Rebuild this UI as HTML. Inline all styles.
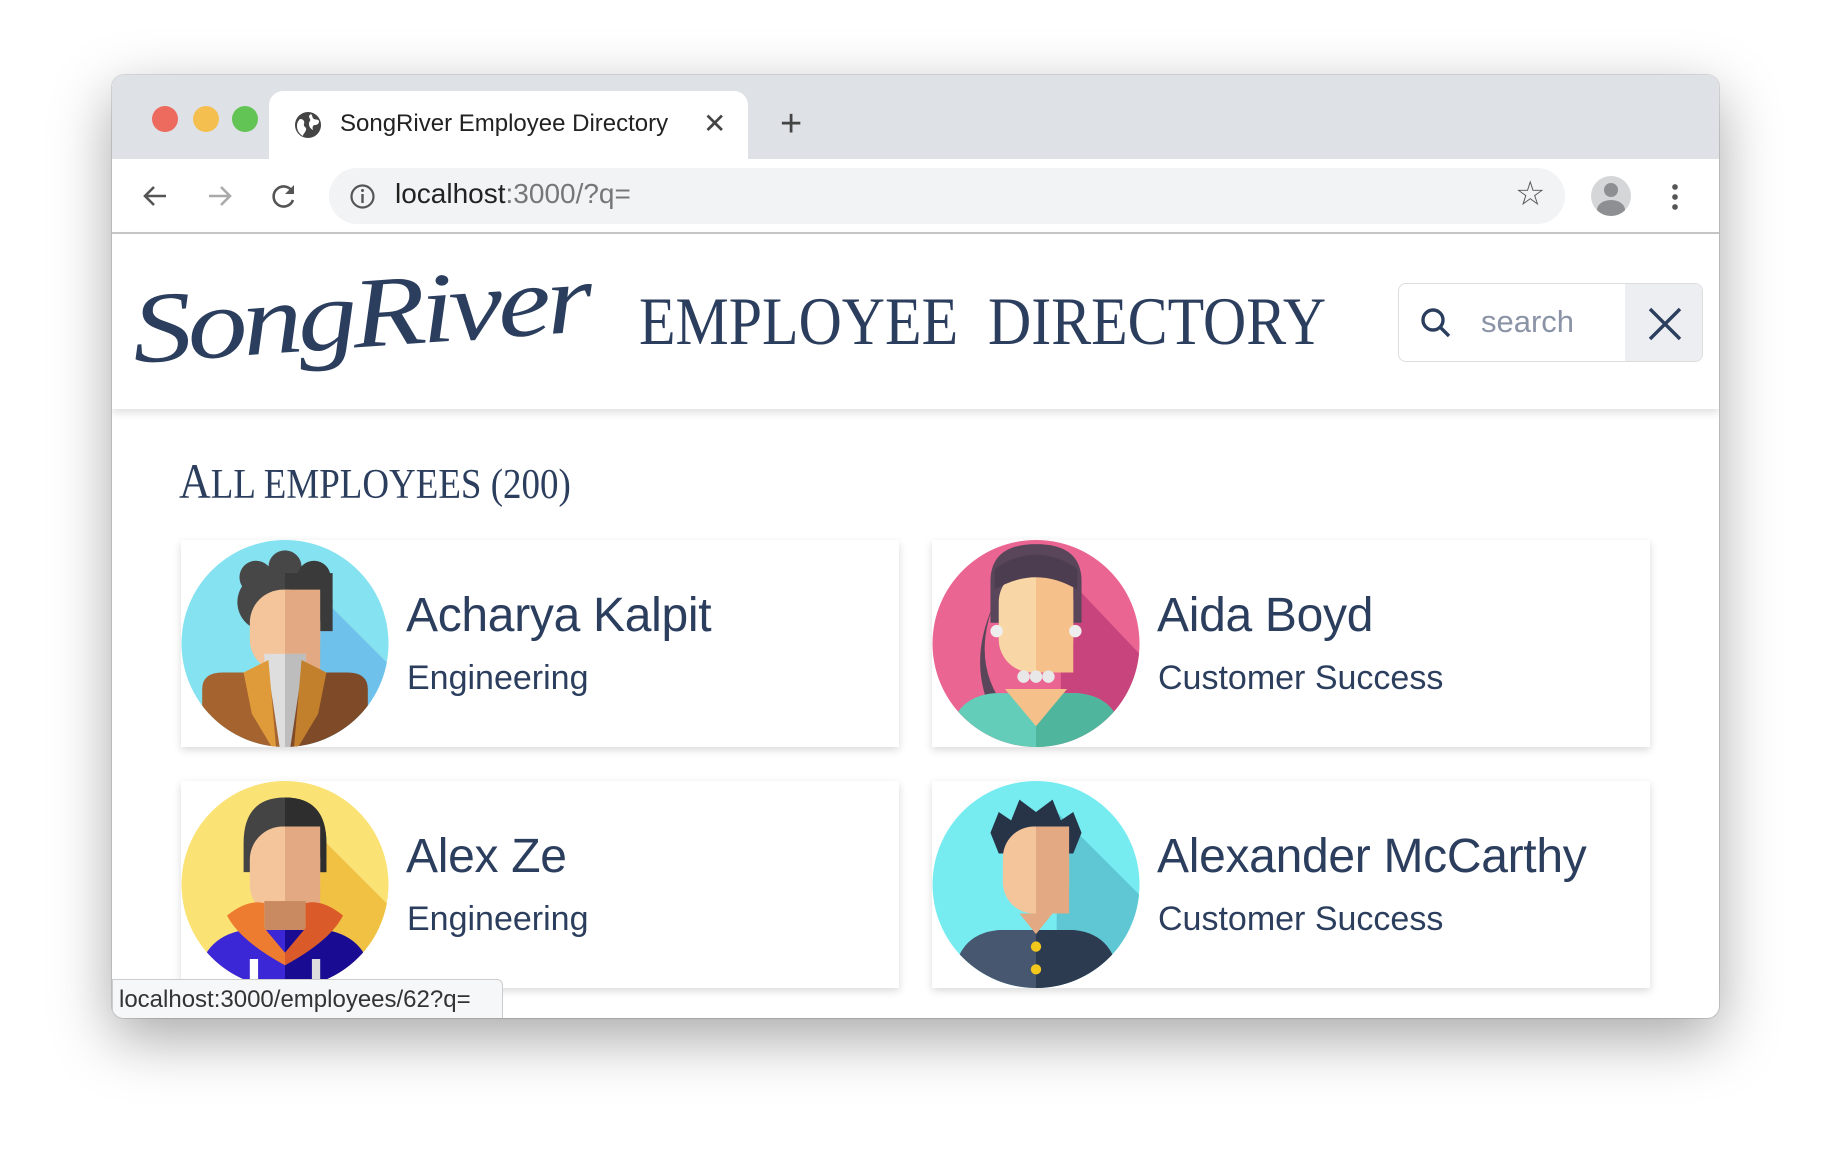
<!DOCTYPE html>
<html><head><meta charset="utf-8"><style>
*{box-sizing:border-box;margin:0;padding:0}
body{width:1832px;height:1168px;background:#fff;position:relative;overflow:hidden;font-family:"Liberation Sans",sans-serif}
.win{position:absolute;left:112px;top:75px;width:1607px;height:943px;border-radius:12px;overflow:hidden;background:#fff;box-shadow:0 20px 60px rgba(0,0,0,.35),0 0 0 1px rgba(0,0,0,.12)}
.strip{position:absolute;left:0;top:0;width:100%;height:84px;background:#dee1e6}
.dot{position:absolute;top:31px;width:26px;height:26px;border-radius:50%}
.tab{position:absolute;left:157px;top:16px;width:479px;height:70px;background:#fff;border-radius:14px 14px 0 0}
.tbar{position:absolute;left:0;top:84px;width:100%;height:75px;background:#fff;border-bottom:2px solid #c8c8c8}
.omni{position:absolute;left:217px;top:9px;width:1236px;height:56px;border-radius:28px;background:#f1f3f4}
.hdr{position:absolute;left:0;top:159px;width:100%;height:175px;background:#fff;box-shadow:0 4px 8px rgba(0,0,0,.12);z-index:2}
.navy{color:#2c3e5e}
.card{position:absolute;width:718px;height:207px;background:#fff;box-shadow:0 3px 8px rgba(0,0,0,.15)}
.card svg{position:absolute;left:-1px;top:0}
.nm{position:absolute;left:225px;top:48px;font-size:48px;color:#2c3e5e;letter-spacing:-.3px}
.dp{position:absolute;left:226px;top:119px;font-size:34px;color:#2c3e5e}
</style></head><body>
<div class="win">
 <div class="strip">
  <div class="dot" style="left:40px;background:#ed6a5e"></div>
  <div class="dot" style="left:81px;background:#f5bf4f"></div>
  <div class="dot" style="left:120px;background:#62c454"></div>
  <div class="tab">
   <svg style="position:absolute;left:24px;top:19px" width="30" height="30" viewBox="0 0 30 30"><circle cx="15" cy="15" r="13" fill="#444"/><path d="M7 9c3 0 5 2 4 5s3 3 2 6-3 4-3 6c-4-2-6-6-6-10 0-3 1-5 3-7zM18 4c2 2 1 4 3 5s4 0 5 2c0 3-2 4-4 4s-3 2-2 5c-2-1-4-3-4-6s2-3 1-5-2-3 1-5z" fill="#fff"/></svg>
   <div style="position:absolute;left:71px;top:19px;font-size:24px;color:#222">SongRiver Employee Directory</div>
   <div style="position:absolute;left:434px;top:16px;font-size:28px;color:#444">✕</div>
  </div>
  <div style="position:absolute;left:668px;top:28px;font-size:38px;color:#444;font-weight:300">+</div>
 </div>
 <div class="tbar">
  <svg style="position:absolute;left:28px;top:22px" width="30" height="30" viewBox="0 0 30 30" fill="none" stroke="#555" stroke-width="2.6"><path d="M26 15H5M14 6l-9 9 9 9"/></svg>
  <svg style="position:absolute;left:93px;top:22px" width="30" height="30" viewBox="0 0 30 30" fill="none" stroke="#aaa" stroke-width="2.6"><path d="M4 15h21M16 6l9 9-9 9"/></svg>
  <svg style="position:absolute;left:157px;top:22px" width="30" height="30" viewBox="0 0 30 30" fill="none" stroke="#555" stroke-width="2.6"><path d="M24 12A10 10 0 1 0 24 19"/><path d="M25 4v9h-9" fill="#555" stroke="none"/></svg>
  <div class="omni">
   <svg style="position:absolute;left:20px;top:15px" width="27" height="27" viewBox="0 0 27 27"><circle cx="13.5" cy="13.5" r="11" fill="none" stroke="#555" stroke-width="2.2"/><rect x="12.3" y="11" width="2.4" height="9" fill="#555"/><circle cx="13.5" cy="7.5" r="1.5" fill="#555"/></svg>
   <div style="position:absolute;left:66px;top:10px;font-size:28px;color:#222">localhost<span style="color:#777">:3000/?q=</span></div>
   <div style="position:absolute;left:1186px;top:6px;font-size:34px;color:#555">☆</div>
  </div>
  <div style="position:absolute;left:1479px;top:17px;width:40px;height:40px;border-radius:50%;background:#d5d6d8;overflow:hidden"><div style="position:absolute;left:13px;top:7px;width:14px;height:14px;border-radius:50%;background:#8e8f92"></div><div style="position:absolute;left:6px;top:24px;width:28px;height:20px;border-radius:50%;background:#8e8f92"></div></div>
  <div style="position:absolute;left:1560px;top:23px;width:6px;height:30px;background:radial-gradient(circle,#555 2.6px,transparent 3px) 0 0/6px 10px"></div>
 </div>
 <div class="hdr">
  <div class="navy" style="position:absolute;left:20px;top:38px;font-family:'Liberation Serif',serif;font-style:italic;font-size:100px;letter-spacing:-4px;transform:rotate(-4deg) scaleX(1.2);transform-origin:left">SongRiver</div>
  <div class="navy" style="position:absolute;left:527px;top:48px;font-family:'Liberation Serif',serif;font-size:68px;transform:scaleX(.88);transform-origin:left;white-space:nowrap">EMPLOYEE&nbsp; DIRECTORY</div>
  <div style="position:absolute;left:1286px;top:49px;width:305px;height:79px;border:1.5px solid #ddd;border-radius:8px;overflow:hidden">
   <svg style="position:absolute;left:20px;top:22px" width="34" height="34" viewBox="0 0 34 34" fill="none" stroke="#2c3e5e" stroke-width="3.4"><circle cx="14" cy="14" r="10"/><path d="M21 21l9 9"/></svg>
   <div style="position:absolute;left:82px;top:20px;font-size:31px;color:#8a94a6">search</div>
   <div style="position:absolute;left:226px;top:0;width:80px;height:79px;background:#eceef1"><svg style="position:absolute;left:22px;top:22px" width="36" height="36" viewBox="0 0 36 36" stroke="#2c3e5e" stroke-width="3.4"><path d="M3 3l30 30M33 3L3 33"/></svg></div>
  </div>
 </div>
 <div class="navy" style="position:absolute;left:67px;top:377px;font-family:'Liberation Serif',serif;font-size:42px;text-transform:uppercase;transform:scaleX(.88);transform-origin:left;white-space:nowrap"><span style="font-size:50px">A</span>ll employees (200)</div>

 <div class="card" style="left:69px;top:465px">
  <svg width="210" height="207" viewBox="0 0 100 100"><defs><clipPath id="c1"><ellipse cx="50" cy="50" rx="50" ry="50"/></clipPath></defs><g clip-path="url(#c1)"><rect width="100" height="100" fill="#84e2f1"/><path d="M60 20L100 60V100H60z" fill="#6ec1ea"/><circle cx="36" cy="18" r="8" fill="#474747"/><circle cx="50" cy="13" r="8" fill="#474747"/><circle cx="64" cy="18" r="8" fill="#3a3a3a"/><rect x="27" y="16" width="46" height="28" rx="14" fill="#474747"/><path d="M50 16h23v28H50z" fill="#3a3a3a"/><rect x="33" y="24" width="34" height="40" rx="16" fill="#f4c49b"/><path d="M50 24h17v40H50z" fill="#e2a982"/><rect x="40" y="55" width="20" height="50" fill="#dedede"/><rect x="50" y="55" width="10" height="50" fill="#bdbdbd"/><path d="M10 72q0-8 10-8h22l6 40H10z" fill="#a5632f"/><path d="M90 72q0-8-10-8H58l-6 40h38z" fill="#7f4a27"/><path d="M30 64l12-6 4 46-12-20z" fill="#df9b3a"/><path d="M70 64l-12-6-4 46 12-20z" fill="#c27f2c"/></g></svg>
  <div class="nm">Acharya Kalpit</div><div class="dp">Engineering</div>
 </div>
 <div class="card" style="left:820px;top:465px">
  <svg width="210" height="207" viewBox="0 0 100 100"><defs><clipPath id="c2"><ellipse cx="50" cy="50" rx="50" ry="50"/></clipPath></defs><g clip-path="url(#c2)"><rect width="100" height="100" fill="#ea6592"/><path d="M62 15L100 55V100H62z" fill="#c7457c"/><path d="M28 20q0-18 22-18t22 18v20H28z" fill="#59465a"/><rect x="32" y="14" width="36" height="50" rx="16" fill="#f8d6a5"/><path d="M50 14h18v50H50z" fill="#f5c08a"/><path d="M30 14q20-14 40 0v10q-10-6-20-6t-20 6z" fill="#4d3d50"/><path d="M30 30q-12 30 6 52l-6 4q-14-26 0-56z" fill="#59465a"/><path d="M8 100q0-24 22-26h40q22 2 22 26z" fill="#63cdb9"/><path d="M50 74h20q22 2 22 26H50z" fill="#4fb59d"/><path d="M35 72l15 18 15-18z" fill="#f5c08a"/><circle cx="44" cy="66" r="3" fill="#e8e8e8"/><circle cx="50" cy="66" r="3" fill="#e8e8e8"/><circle cx="56" cy="66" r="3" fill="#e8e8e8"/><circle cx="31" cy="44" r="3" fill="#eee"/><circle cx="69" cy="44" r="3" fill="#eee"/></g></svg>
  <div class="nm">Aida Boyd</div><div class="dp">Customer Success</div>
 </div>
 <div class="card" style="left:69px;top:706px">
  <svg width="210" height="207" viewBox="0 0 100 100"><defs><clipPath id="c3"><ellipse cx="50" cy="50" rx="50" ry="50"/></clipPath></defs><g clip-path="url(#c3)"><rect width="100" height="100" fill="#fae274"/><path d="M60 20L100 60V100H60z" fill="#f0c143"/><path d="M30 30q0-22 20-22t20 22v14H30z" fill="#444"/><path d="M50 8q20 0 20 22v14H50z" fill="#2e2e2e"/><rect x="33" y="22" width="34" height="44" rx="16" fill="#f4c49b"/><path d="M50 22h17v44H50z" fill="#e2a982"/><rect x="40" y="58" width="20" height="14" fill="#c98a62"/><path d="M8 100q0-24 22-28h40q22 4 22 28z" fill="#3c27d6"/><path d="M50 72h20q22 4 22 28H50z" fill="#1a0c92"/><path d="M22 65q10-8 18-6v12l10 12 10-12V59q8-2 18 6-6 12-28 24-22-12-28-24z" fill="#ee7c30"/><path d="M50 83l10-12V59q8-2 18 6-6 12-28 24z" fill="#db5a2a"/><rect x="33" y="86" width="4" height="14" fill="#fff"/><rect x="63" y="86" width="4" height="14" fill="#ddd"/></g></svg>
  <div class="nm">Alex Ze</div><div class="dp">Engineering</div>
 </div>
 <div class="card" style="left:820px;top:706px">
  <svg width="210" height="207" viewBox="0 0 100 100"><defs><clipPath id="c4"><ellipse cx="50" cy="50" rx="50" ry="50"/></clipPath></defs><g clip-path="url(#c4)"><rect width="100" height="100" fill="#77ecf0"/><path d="M60 15L100 55V100H60z" fill="#5fc7d3"/><path d="M28 25l4-10 6 4 4-10 8 6 8-6 4 10 6-4 4 10-4 10H32z" fill="#273448"/><rect x="34" y="22" width="32" height="42" rx="15" fill="#f4c49b"/><path d="M50 22h16v42H50z" fill="#e2a982"/><path d="M10 100q0-26 22-28h36q22 2 22 28z" fill="#46576f"/><path d="M50 72h18q22 2 22 28H50z" fill="#2d3b50"/><path d="M42 64h16l-8 10z" fill="#e2a982"/><circle cx="50" cy="80" r="2.5" fill="#f2c81d"/><circle cx="50" cy="91" r="2.5" fill="#f2c81d"/></g></svg>
  <div class="nm">Alexander McCarthy</div><div class="dp">Customer Success</div>
 </div>
 <div style="position:absolute;left:0;top:904px;width:391px;height:40px;background:#f6f7f8;border:1px solid #ccc;border-radius:0 6px 0 0;font-size:24px;color:#333;padding:6px 6px;z-index:5;white-space:nowrap">localhost:3000/employees/62?q=</div>
</div>
</body></html>
